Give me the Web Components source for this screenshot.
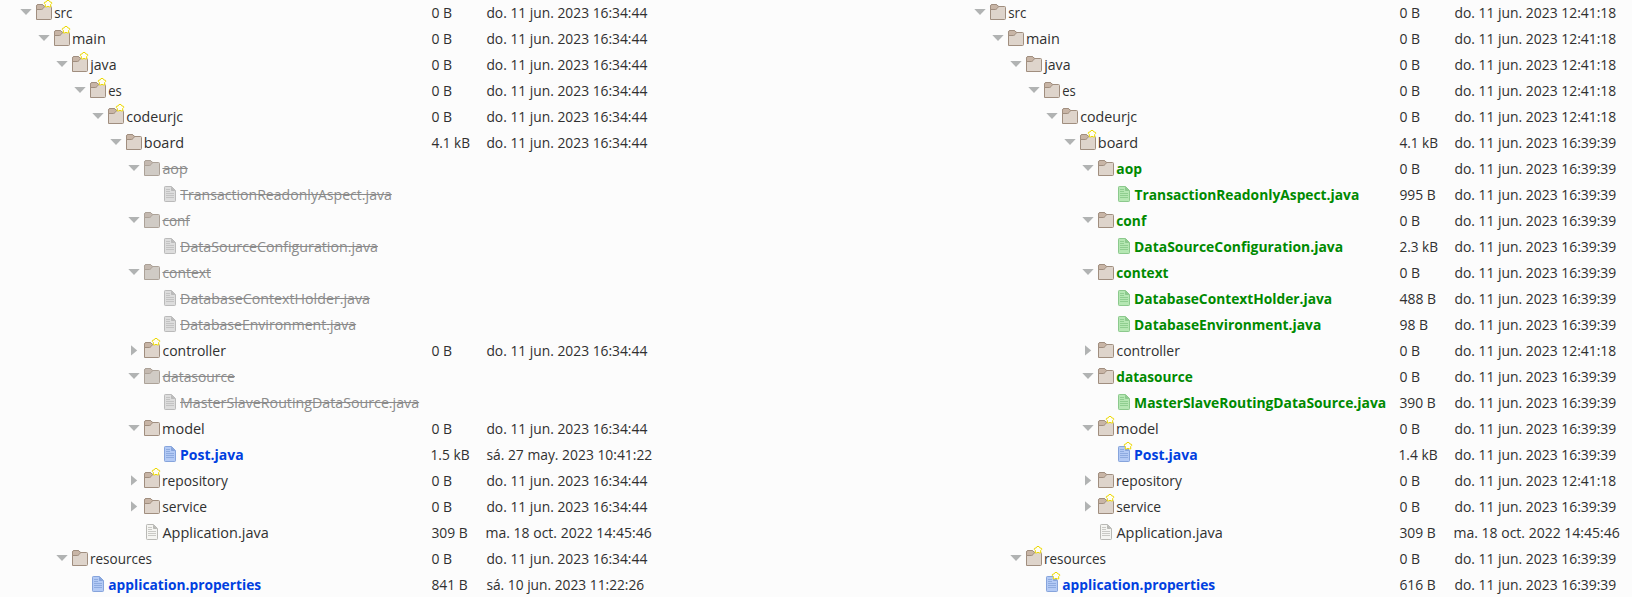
<!DOCTYPE html>
<html lang="es">
<head>
<meta charset="utf-8">
<title>Folder comparison</title>
<style>
html,body{margin:0;height:597px;overflow:hidden;background:#fcfcfc}
</style>
</head>
<body>
<folder-compare></folder-compare>
<script>
const FONT='"Open Sans","Noto Sans",sans-serif';
const ctx=document.createElement('canvas').getContext('2d');

/* One line of text whose drawn width is fitted to the "w" attribute, beginning at "x". */
class FitText extends HTMLElement{
  connectedCallback(){
    const r=this.attachShadow({mode:'open'});
    r.innerHTML=`<style>
      :host{display:block;width:0;white-space:pre;font:15px/25px ${FONT};color:#303030}
      :host([tone=green]){color:#008a00;font-weight:700}
      :host([tone=blue]){color:#003fe0;font-weight:700}
      :host([tone=gone]){color:#8b8b8b}
      :host([tone=gone]) span{text-decoration:line-through;text-decoration-thickness:1px}
      span{display:inline-block;transform-origin:0 0}
    </style><span><slot></slot></span>`;
    const tone=this.getAttribute('tone');
    ctx.font=(tone==='green'||tone==='blue'?'700 ':'')+'15px '+FONT;
    const m=ctx.measureText(this.textContent);
    const l=-m.actualBoundingBoxLeft, ink=m.actualBoundingBoxRight-l;
    const s=this.getAttribute('w')/ink;
    r.querySelector('span').style.transform=`translateX(${(+this.getAttribute('x')-l*s).toFixed(2)}px) scaleX(${s.toFixed(4)})`;
  }
}
customElements.define('fit-text',FitText);

class NodeIcon extends HTMLElement{
  connectedCallback(){
    const kind=this.getAttribute('kind');
    const c={
      folder:['#a08e7f','#ded4cb','#c8b5a6'],
      ghost:['#aca298','#d0cbc5','#c4b9b0'],
      plain:['#b9b9b5','#f5f5f2','#c9c9c5'],
      gone:['#bababa','#dddddd','#c3c3c3'],
      green:['#8cc98d','#b5e7b3','#8fce90'],
      blue:['#86a4dc','#b3caf5','#8eabe0']
    }[kind];
    const dir=kind==='folder'||kind==='ghost';
    const shape=dir
      ?`<path d="M.5 15.5V2.2Q.5 1 1.7.5H6.3L8.7 2.5H14.5Q15.5 2.5 15.5 3.5V14.5Q15.5 15.5 14.5 15.5Z" fill="${c[1]}" stroke="${c[0]}"/>
        <path d="M.5 5.5V2.2Q.5 1 1.7.5H6.3L8.7 2.5L7 4.6Q6.3 5.5 5.3 5.5Z" fill="${c[2]}" stroke="${c[0]}"/>`
      :`<path d="M3.3.5H9.5L13.5 4.5V14.7Q13.5 15.5 12.7 15.5H3.3Q2.5 15.5 2.5 14.7V1.3Q2.5.5 3.3.5Z" fill="${c[1]}" stroke="${c[0]}"/>
        <path d="M9 .5L13.5 5H9.8Q9 5 9 4.2Z" fill="${c[0]}"/>
        <path d="M4 3.5H8M4 5.5H8M4 7.5H12M4 9.5H12M4 11.5H12" stroke="${c[2]}" stroke-width="1"/>`;
    const star=this.hasAttribute('newer')
      ?`<path d="M11-3.5H13L13.7-2.2L15.6-1.6V-.4L14.6.6L14.8 2.9H13.2L12 2.3L10.8 2.9H9.2L9.4.6L8.4-.4V-1.6L10.3-2.2Z" fill="#fffef6" stroke="#ecd800" stroke-linejoin="round"/>`:'';
    this.attachShadow({mode:'open'}).innerHTML=`<style>
      :host{display:block;width:16px;height:16px}
      svg{display:block;overflow:visible}
    </style><svg width="16" height="16" fill="none">${shape}${star}</svg>`;
  }
}
customElements.define('node-icon',NodeIcon);

class TreeTwisty extends HTMLElement{
  connectedCallback(){
    const d={open:'M.3 9H11.7L6 15Z',closed:'M3 7.2L9.2 12.5L3 17.6Z'}[this.getAttribute('state')]||'';
    this.attachShadow({mode:'open'}).innerHTML=`<style>:host{display:block;width:12px;height:26px}svg{display:block}</style>
      <svg width="12" height="26"><path d="${d}" fill="#b1b3b3"/></svg>`;
  }
}
customElements.define('tree-twisty',TreeTwisty);

class TreeRow extends HTMLElement{
  connectedCallback(){
    this.attachShadow({mode:'open'}).innerHTML=`<style>
      :host{display:grid;grid-template-columns:var(--name) 55px 170px;height:26px}
      .name{display:flex;align-items:flex-start}
      ::slotted(node-icon){margin:4px 2px 0 4px}
    </style><div class="name"><slot name="node"></slot></div><slot name="size"></slot><slot name="date"></slot>`;
    this.shadowRoot.querySelector('.name').style.paddingLeft=this.getAttribute('depth')*18+'px';
  }
}
customElements.define('tree-row',TreeRow);

/* depth, twisty, icon, name, ink offset, ink width, newer, size, size width, date, date width */
const A='do. 11 jun. 2023 16:34:44', B='do. 11 jun. 2023 12:41:18', C='do. 11 jun. 2023 16:39:39', W=161.3;
const O='open', K='closed', F='folder', G='ghost';
const LEFT=[
 [0,O,F,'src',.2,18,1,'0 B',20,A,W],
 [1,O,F,'main',.9,31.8,1,'0 B',20,A,W],
 [2,O,F,'java',-.8,27,1,'0 B',20,A,W],
 [3,O,F,'es',.3,13.4,1,'0 B',20,A,W],
 [4,O,F,'codeurjc',.2,56.8,1,'0 B',20,A,W],
 [5,O,F,'board',.8,38.2,0,'4.1 kB',38,A,W],
 [6,O,G,'aop',.4,25.2,0],
 [7,'','gone','TransactionReadonlyAspect.java',.2,211.3,0],
 [6,O,G,'conf',.4,28.4,0],
 [7,'','gone','DataSourceConfiguration.java',1,196.7,0],
 [6,O,G,'context',.4,48.2,0],
 [7,'','gone','DatabaseContextHolder.java',1,188.7,0],
 [7,'','gone','DatabaseEnvironment.java',1,174.8,0],
 [6,K,F,'controller',.5,63.3,1,'0 B',20,A,W],
 [6,O,G,'datasource',.5,72,0],
 [7,'','gone','MasterSlaveRoutingDataSource.java',1,237.8,0],
 [6,O,F,'model',1,41,0,'0 B',20,A,W],
 [7,'','blue','Post.java',1,61.6,0,'1.5 kB',37.5,'sá. 27 may. 2023 10:41:22',165.3],
 [6,K,F,'repository',.9,65.4,1,'0 B',20,A,W],
 [6,K,F,'service',.3,44.3,0,'0 B',20,A,W],
 [6,'','plain','Application.java',.4,106,0,'309 B',35.7,'ma. 18 oct. 2022 14:45:46',164.8],
 [2,O,F,'resources',.9,61,0,'0 B',20,A,W],
 [3,'','blue','application.properties',.3,152.4,0,'841 B',35.5,'sá. 10 jun. 2023 11:22:26',157.3]
];
const RIGHT=[
 [0,O,F,'src',.2,18,0,'0 B',20,B,W],
 [1,O,F,'main',.9,31.8,0,'0 B',20,B,W],
 [2,O,F,'java',-.8,27,0,'0 B',20,B,W],
 [3,O,F,'es',.3,13.4,0,'0 B',20,B,W],
 [4,O,F,'codeurjc',.2,56.8,0,'0 B',20,B,W],
 [5,O,F,'board',.8,38.2,1,'4.1 kB',38,C,W],
 [6,O,F,'aop',.3,25.3,0,'0 B',20,C,W,'green'],
 [7,'','green','TransactionReadonlyAspect.java',.5,223.8,0,'995 B',35.7,C,W],
 [6,O,F,'conf',.3,31,0,'0 B',20,C,W,'green'],
 [7,'','green','DataSourceConfiguration.java',1,207.2,0,'2.3 kB',38,C,W],
 [6,O,F,'context',.3,52.6,0,'0 B',20,C,W,'green'],
 [7,'','green','DatabaseContextHolder.java',1,196.2,0,'488 B',36,C,W],
 [7,'','green','DatabaseEnvironment.java',1,185.3,0,'98 B',28,C,W],
 [6,K,F,'controller',.5,63.3,0,'0 B',20,B,W],
 [6,O,F,'datasource',.3,76.6,0,'0 B',20,C,W,'green'],
 [7,'','green','MasterSlaveRoutingDataSource.java',1,250.2,0,'390 B',35.7,C,W],
 [6,O,F,'model',1,41,1,'0 B',20,C,W],
 [7,'','blue','Post.java',1,61.6,1,'1.4 kB',37.5,C,W],
 [6,K,F,'repository',.9,65.4,0,'0 B',20,B,W],
 [6,K,F,'service',.3,44.3,1,'0 B',20,C,W],
 [6,'','plain','Application.java',.4,106,0,'309 B',35.7,'ma. 18 oct. 2022 14:45:46',164.8],
 [2,O,F,'resources',.9,61,1,'0 B',20,C,W],
 [3,'','blue','application.properties',.3,152.4,1,'616 B',35.7,C,W]
];

class FolderTree extends HTMLElement{
  connectedCallback(){
    const rows=this.getAttribute('side')==='left'?LEFT:RIGHT;
    this.attachShadow({mode:'open'}).innerHTML='<style>:host{display:block}</style>'+rows.map(
      ([depth,tw,icon,name,x,w,newer,size,sw,date,dw,tone])=>{
        tone=tone||(icon==='ghost'||icon==='gone'?'gone':icon==='green'||icon==='blue'?icon:'');
        return `<tree-row depth="${depth}"><tree-twisty slot="node" state="${tw}"></tree-twisty>`+
        `<node-icon slot="node" kind="${icon}" ${newer?'newer':''}></node-icon>`+
        `<fit-text slot="node" tone="${tone}" x="${x}" w="${w}">${name}</fit-text>`+
        (size?`<fit-text slot="size" x=".4" w="${sw}">${size}</fit-text><fit-text slot="date" x=".4" w="${dw}">${date}</fit-text>`:'')+
        '</tree-row>';
      }).join('');
  }
}
customElements.define('folder-tree',FolderTree);

class FolderCompare extends HTMLElement{
  connectedCallback(){
    this.attachShadow({mode:'open'}).innerHTML=`<style>
      :host{display:grid;grid-template-columns:954px 1fr;padding-left:20px;height:597px;overflow:hidden;box-sizing:border-box}
      .l{--name:411px}.r{--name:425px}
    </style><folder-tree class="l" side="left"></folder-tree><folder-tree class="r" side="right"></folder-tree>`;
  }
}
customElements.define('folder-compare',FolderCompare);
</script>
</body>
</html>
